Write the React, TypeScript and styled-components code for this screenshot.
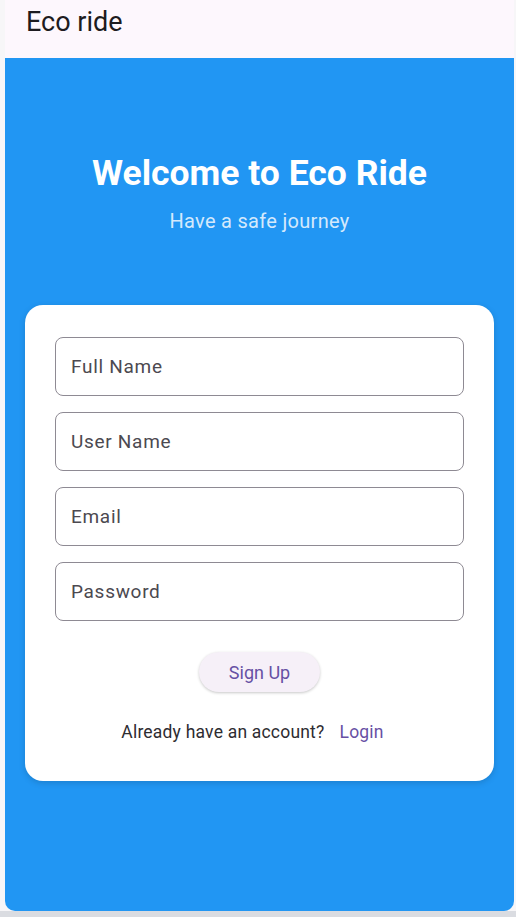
import React from 'react';
import styled, { createGlobalStyle } from 'styled-components';

const GlobalStyle = createGlobalStyle`
  html, body {
    margin: 0;
    padding: 0;
    background: #dadce1;
  }
  * {
    box-sizing: border-box;
  }
`;

const fields = ['Full Name', 'User Name', 'Email', 'Password'];

const App = () => {
  return (
    <Frame>
      <GlobalStyle />
      <AppBar>
        <AppTitle>Eco ride</AppTitle>
      </AppBar>
      <BluePanel>
        <Heading>Welcome to Eco Ride</Heading>
        <SubHeading>Have a safe journey</SubHeading>
        <Card>
          <FieldList>
            {fields.map((f) => (
              <Field key={f} placeholder={f} type={f === 'Password' ? 'password' : 'text'} />
            ))}
          </FieldList>
          <SignUpButton>Sign Up</SignUpButton>
          <LoginRow>
            <span>Already have an account?</span>
            <LoginLink>Login</LoginLink>
          </LoginRow>
        </Card>
      </BluePanel>
    </Frame>
  );
};

const Frame = styled.div`
height: 911px;
display: flex;
flex-direction: column;
padding: 0 2px 0 5px;
background: #f7f6f8;
font-family: Roboto, "Liberation Sans", sans-serif;
`

const AppBar = styled.div`
height: 58px;
flex-shrink: 0;
background: #fdf7fd;
padding: 7px 0 0 21px;
`

const AppTitle = styled.div`
font-size: 27px;
line-height: 30px;
color: #1d1b20;
`

const BluePanel = styled.div`
flex: 1;
background: #2196f3;
border-radius: 0 0 10px 10px;
display: flex;
flex-direction: column;
align-items: center;
padding: 94px 20px 0 20px;
`

const Heading = styled.h1`
margin: 0;
font-size: 35.5px;
line-height: 42px;
font-weight: 700;
color: #ffffff;
`

const SubHeading = styled.div`
margin-top: 15px;
font-size: 20px;
line-height: 24px;
letter-spacing: 0.3px;
color: #d4e9fc;
`

const Card = styled.div`
margin-top: 72px;
align-self: stretch;
background: #ffffff;
border-radius: 18px;
padding: 32px 30px 38px 30px;
display: flex;
flex-direction: column;
align-items: center;
box-shadow: 0 2px 6px rgba(0, 0, 0, 0.15);
`

const FieldList = styled.div`
align-self: stretch;
display: flex;
flex-direction: column;
gap: 16px;
`

const Field = styled.input`
height: 59px;
width: 100%;
border: 1px solid #8e8a93;
border-radius: 8px;
padding: 0 15px;
font-family: Roboto, "Liberation Sans", sans-serif;
font-size: 19px;
letter-spacing: 0.7px;
color: #1d1b20;
background: #ffffff;
outline: none;
&::placeholder {
  color: #4c4950;
}
`

const SignUpButton = styled.button`
margin-top: 31px;
width: 121px;
height: 40px;
border: none;
border-radius: 20px;
background: #f6f0f8;
color: #6750a4;
font-family: Roboto, "Liberation Sans", sans-serif;
font-size: 18px;
box-shadow: 0 1px 3px rgba(0, 0, 0, 0.22);
cursor: pointer;
`

const LoginRow = styled.div`
margin-top: 29px;
padding-right: 14px;
display: flex;
gap: 15px;
font-size: 17.5px;
line-height: 22px;
letter-spacing: 0.2px;
color: #2e2c31;
`

const LoginLink = styled.span`
color: #6750a4;
`

export default App;
